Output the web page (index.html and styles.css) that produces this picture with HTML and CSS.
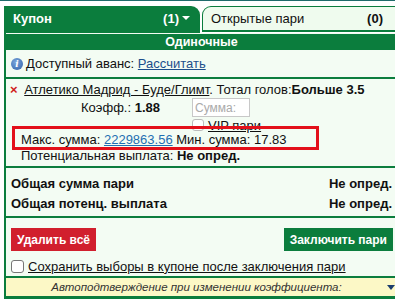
FILE: index.html
```html
<!DOCTYPE html>
<html lang="ru">

<head>
    <meta charset="UTF-8">
    <meta name="viewport" content="width=device-width, initial-scale=1.0">
    <title>Купон</title>
    <link rel="stylesheet" href="styles.css">
</head>

<body>
    <div class="topline"></div>
    <div class="coupon">
        <div class="tabs">
            <div class="tab tab-active">
                <span>Купон</span>
                <span class="count">(1) <i class="caret caret-white"></i></span>
            </div>
            <div class="tab tab-open">
                <span>Открытые пари</span>
                <b>(0)</b>
            </div>
        </div>
        <div class="panel">
            <div class="panel-head">Одиночные</div>

            <div class="avans">
                <span class="info">i</span>
                <span>Доступный аванс: <a href="#">Рассчитать</a></span>
            </div>

            <div class="bet">
                <div class="bet-title">
                    <span class="remove">&times;</span>
                    <a href="#" class="event">Атлетико Мадрид - Буде/Глимт</a>. Тотал голов:<b>Больше 3.5</b>
                </div>
                <div class="bet-row">
                    <div class="coef">Коэфф.: <b>1.88</b></div>
                    <div class="stake">
                        <input type="text" placeholder="Сумма:">
                        <label class="vip"><span class="box"></span><u>VIP пари</u></label>
                    </div>
                </div>
                <div class="limits">
                    Макс. сумма: <a href="#">2229863.56</a> Мин. сумма: 17.83
                </div>
                <div class="payout">Потенциальная выплата: <b>Не опред.</b></div>
            </div>

            <div class="totals">
                <div class="total-row"><span>Общая сумма пари</span><span>Не опред.</span></div>
                <div class="total-row"><span>Общая потенц. выплата</span><span>Не опред.</span></div>
            </div>

            <div class="actions">
                <button class="btn btn-red">Удалить всё</button>
                <button class="btn btn-green">Заключить пари</button>
            </div>

            <label class="keep"><span class="box"></span><u>Сохранить выборы в купоне после заключения пари</u></label>

            <div class="autoconfirm">
                <span>Автоподтверждение при изменении коэффициента:</span>
                <i class="caret caret-dark"></i>
            </div>
        </div>
    </div>
</body>

</html>
```

FILE: styles.css
```css
body {
    margin: 0;
    font-family: "Liberation Sans", Arial, sans-serif;
    font-size: 13px;
    color: #111;
    background-color: white;
}

.topline {
    height: 1px;
    background-color: #1f6b6b;
}

.coupon {
    margin: 5px 0 0 4px;
    width: 393px;
}

/* Вкладки */
.tabs {
    display: flex;
    gap: 2px;
}

.tab {
    height: 24px;
    display: flex;
    align-items: center;
    justify-content: space-between;
    box-sizing: border-box;
}

.tab-active {
    width: 196px;
    height: 27px;
    padding: 0 10px 3px 9px;
    background-color: #0b7d3d;
    color: white;
    font-weight: bold;
    border-top-right-radius: 9px;
}

.tab-open {
    flex: 1;
    height: 26px;
    padding: 0 13px 0 8px;
    background-color: #effbee;
    border: 1px solid #0b7d3d;
    border-bottom: 2px solid #0b7d3d;
    border-top-left-radius: 9px;
}

.count {
    display: flex;
    align-items: center;
    gap: 3px;
}

.caret {
    display: inline-block;
    width: 0;
    height: 0;
    border-left: 4px solid transparent;
    border-right: 4px solid transparent;
    border-top: 4px solid white;
}

.caret-dark {
    border-top-color: #1c3d6e;
    border-top-width: 5px;
}

/* Панель */
.panel {
    border-left: 2px solid #0b7d3d;
    border-bottom: 3px solid #0b7d3d;
    background-color: #f3fcf3;
    padding-top: 1px;
}

.panel-head {
    background-color: #0b7d3d;
    color: white;
    font-weight: bold;
    font-size: 12.5px;
    text-align: center;
    height: 16px;
    line-height: 16px;
}

.avans {
    height: 27px;
    display: flex;
    align-items: center;
    gap: 3px;
    padding-left: 5px;
    border-bottom: 2px solid #0b7d3d;
}

.info {
    width: 12px;
    height: 12px;
    border-radius: 50%;
    background: radial-gradient(circle at 40% 35%, #7aa6dc, #2e5fa8);
    color: white;
    font-size: 9px;
    font-weight: bold;
    font-style: italic;
    font-family: "DejaVu Serif", serif;
    line-height: 12px;
    text-align: center;
}

a {
    color: #1c4f8c;
}

.bet {
    padding: 3px 0 2px 4px;
    border-bottom: 2px solid #0b7d3d;
}

.bet-title {
    height: 16px;
    line-height: 16px;
}

.remove {
    color: #d02020;
    font-weight: bold;
    font-size: 13px;
    margin-right: 3px;
}

.event {
    color: #111;
}

.bet-row {
    display: flex;
}

.coef {
    width: 111px;
    padding: 2px 0 0 71px;
}

.stake {
    display: flex;
    flex-direction: column;
}

.stake input {
    width: 58px;
    height: 19px;
    box-sizing: border-box;
    border: 1px solid #c8c8c8;
    background-color: white;
    font-family: inherit;
    font-size: 12px;
    padding: 0 2px;
    margin: 0;
}

.stake input::placeholder {
    color: #aaa;
}

.box {
    display: inline-block;
    flex: none;
    width: 12px;
    height: 12px;
    border: 1px solid #777;
    border-radius: 3px;
    background-color: white;
    box-sizing: border-box;
}

.vip {
    display: flex;
    align-items: center;
    gap: 4px;
    height: 14px;
    margin-top: 1px;
}

.vip .box {
    border-color: #bbb;
}

.limits {
    position: relative;
    height: 16px;
    line-height: 16px;
    padding-left: 11px;
}

.limits a {
    color: #1f6fb2;
}

/* Выделение лимитов */
.limits::before {
    content: "";
    position: absolute;
    left: 2px;
    top: -6px;
    width: 307px;
    height: 24px;
    box-sizing: border-box;
    border: 3px solid #e3101a;
}

.payout {
    height: 16px;
    line-height: 16px;
    padding-left: 11px;
}

.totals {
    padding: 6px 5px 2px 5px;
    border-bottom: 2px solid #0b7d3d;
    font-weight: bold;
}

.total-row {
    display: flex;
    justify-content: space-between;
    height: 20px;
    line-height: 20px;
}

.actions {
    display: flex;
    justify-content: space-between;
    padding: 10px 4px 0 5px;
}

.btn {
    border: none;
    color: white;
    font-family: inherit;
    font-size: 12px;
    font-weight: bold;
    height: 23px;
    padding: 0 6px;
    white-space: nowrap;
    cursor: pointer;
}

.btn-red {
    background-color: #d11f2d;
}

.btn-green {
    background-color: #0b7d3d;
}

.keep {
    display: flex;
    align-items: center;
    gap: 4px;
    height: 20px;
    padding: 5px 0 0 5px;
    border-bottom: 2px solid #0b7d3d;
}

.keep .box {
    width: 13px;
    height: 13px;
}

.autoconfirm {
    height: 18px;
    background-color: #fcf8c6;
    display: flex;
    align-items: center;
    padding: 0 2px 0 0;
    font-size: 11.5px;
    font-style: italic;
    color: #333;
}

.autoconfirm span {
    flex: 1;
    text-align: center;
}
```
